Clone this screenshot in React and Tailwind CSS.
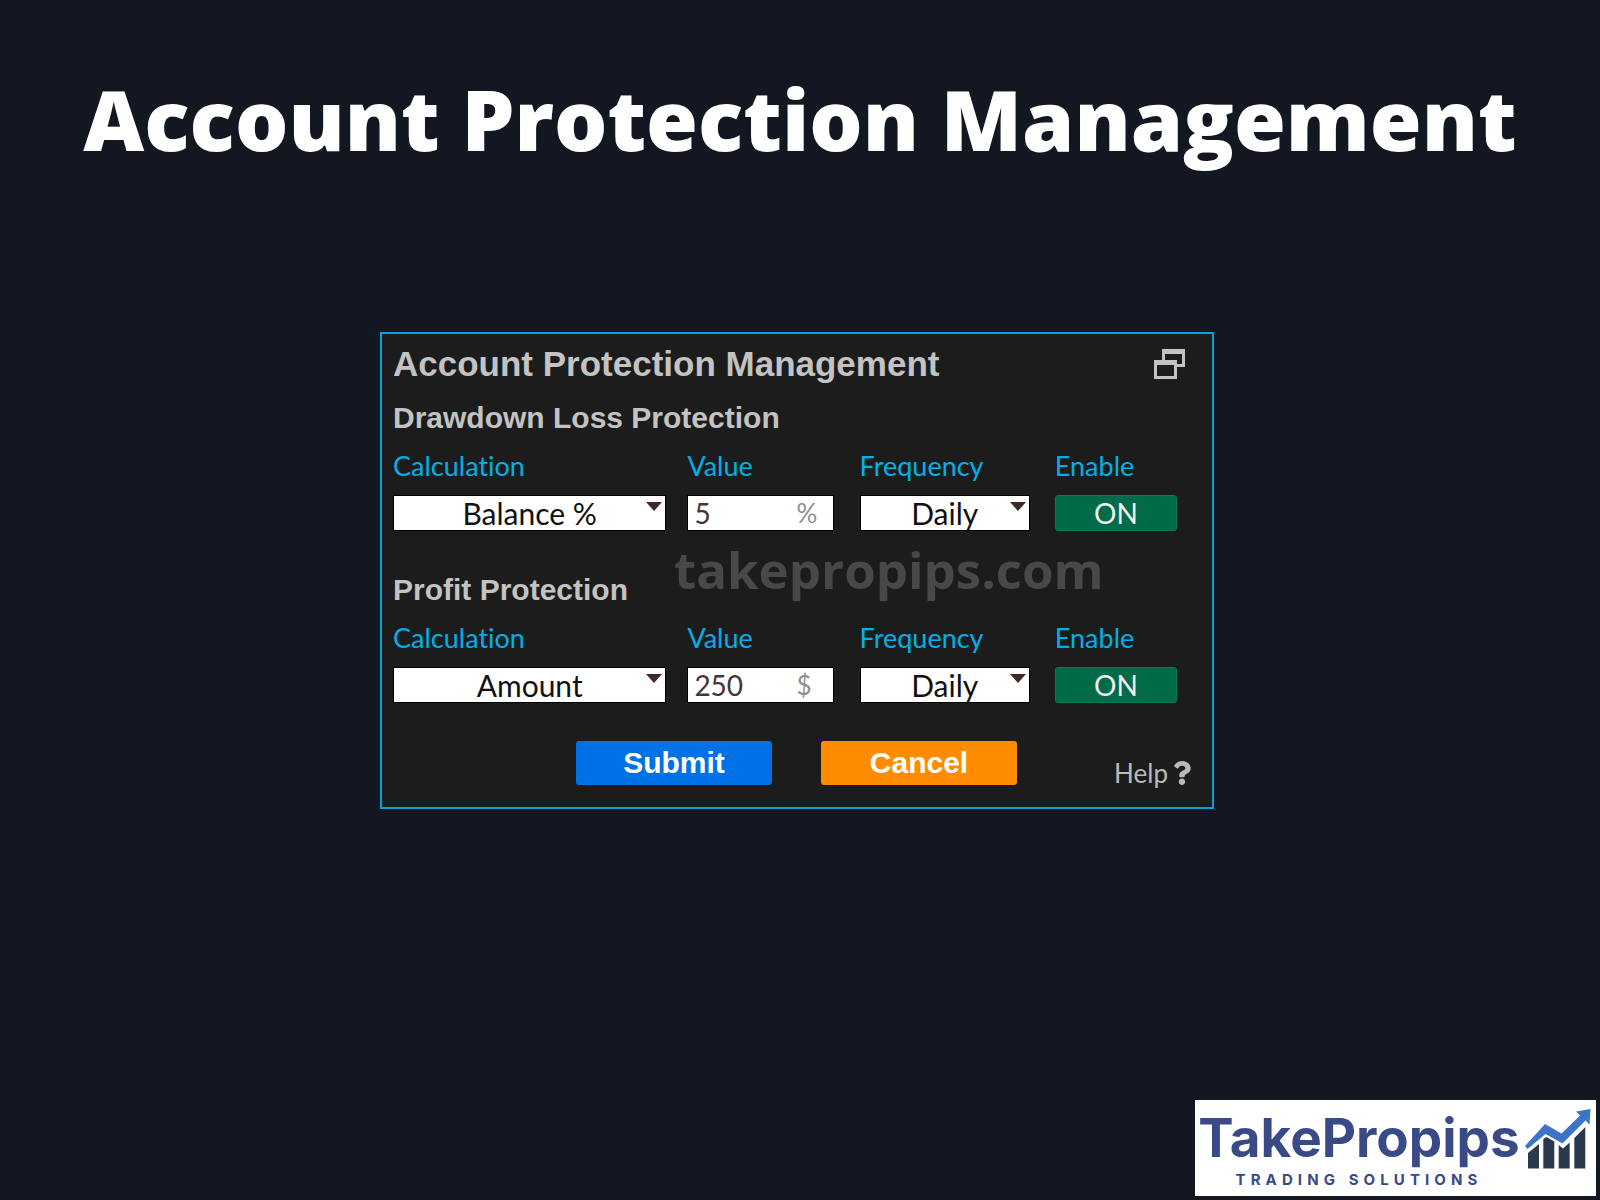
import { useState } from 'react'
import { FaQuestion } from 'react-icons/fa'

const groups = [
  {
    id: 'drawdown',
    title: 'Drawdown Loss Protection',
    calculation: 'Balance %',
    value: '5',
    unit: '%',
    frequency: 'Daily',
  },
  {
    id: 'profit',
    title: 'Profit Protection',
    calculation: 'Amount',
    value: '250',
    unit: '$',
    frequency: 'Daily',
  },
]

const calculations = ['Balance %', 'Amount']
const frequencies = ['Daily', 'Weekly', 'Monthly']

function Field({ id, label, className, children }) {
  return (
    <div className={className}>
      <label htmlFor={id} className="mb-[13px] block text-[27px] leading-8 text-[#00b0e8]">
        {label}
      </label>
      {children}
    </div>
  )
}

function SelectBox({ id, options, defaultValue }) {
  return (
    <div className="relative">
      <select
        id={id}
        defaultValue={defaultValue}
        className="block h-9 w-full appearance-none border border-black bg-white px-6 text-center text-[30px] leading-[34px] text-[#111111]"
      >
        {options.map((option) => (
          <option key={option}>{option}</option>
        ))}
      </select>
      <svg viewBox="0 0 16 9" className="pointer-events-none absolute top-[7px] right-1 h-[9px] w-4" aria-hidden="true">
        <path d="M0 0h16L8 9z" fill="#402828" />
      </svg>
    </div>
  )
}

function ProtectionGroup({ group }) {
  const [on, setOn] = useState(true)

  return (
    <section>
      <h3 className="mb-3.5 font-['Liberation_Sans',sans-serif] text-[30px] leading-9 font-bold text-[#c3c3c3]">
        {group.title}
      </h3>
      <div className="grid grid-cols-[294fr_172fr_195fr_122fr]">
        <Field id={`${group.id}-calculation`} label="Calculation" className="pr-[21px]">
          <SelectBox id={`${group.id}-calculation`} options={calculations} defaultValue={group.calculation} />
        </Field>
        <Field id={`${group.id}-value`} label="Value" className="pr-[26px]">
          <div className="flex h-9 items-center border border-black bg-white pr-3 pl-1.5">
            <input
              id={`${group.id}-value`}
              defaultValue={group.value}
              className="h-[34px] w-full min-w-0 text-[28px] leading-[34px] text-[#443636] outline-none"
            />
            <span className="w-6 shrink-0 text-[26px] leading-[34px] text-[#8f8f8f]">{group.unit}</span>
          </div>
        </Field>
        <Field id={`${group.id}-frequency`} label="Frequency" className="pr-[25px]">
          <SelectBox id={`${group.id}-frequency`} options={frequencies} defaultValue={group.frequency} />
        </Field>
        <Field id={`${group.id}-enable`} label="Enable">
          <button
            id={`${group.id}-enable`}
            type="button"
            aria-pressed={on}
            onClick={() => setOn(!on)}
            className="block h-9 w-full rounded-[3px] border border-[#007d58] bg-[#006b48] text-[28px] leading-[34px] text-[#f0f0f0]"
          >
            {on ? 'ON' : 'OFF'}
          </button>
        </Field>
      </div>
    </section>
  )
}

function Logo() {
  return (
    <div className="flex h-24 w-[401px] bg-white pl-1 text-[#394a87]">
      <div className="flex w-[320px] flex-col items-center pt-2 font-['Inter',sans-serif]">
        <div className="text-[53px] leading-[60px] font-bold">TakePropips</div>
        <div className="text-[15px] leading-6 font-bold tracking-[0.34em]">TRADING SOLUTIONS</div>
      </div>
      <svg viewBox="0 0 70 64" className="mt-2 ml-1.5 h-16 w-[70px]" aria-hidden="true">
        <g fill="#2a3a4c">
          <path d="M3 45L14 36V60.500H3z" />
          <path d="M18.300 31L21.500 29L29.300 33.500V60.500H18.300z" />
          <path d="M33.700 37L38 40.500L44.700 34.500V60.500H33.700z" />
          <path d="M49.300 30L60.300 19V60.500H49.300z" />
        </g>
        <path
          d="M0 38L20 16L36.500 25.500L55 7.500L51 3.500L65.500 1L64.500 16.500L60.500 12.500L37.500 35.500L20.500 26L2.500 41z"
          fill="#3d74c8"
        />
      </svg>
    </div>
  )
}

export default function App() {
  return (
    <div className="flex min-h-screen flex-col bg-[#131722] font-['Lato',sans-serif] [font-variant-ligatures:none]">
      <h1 className="pt-[61px] text-center font-['Open_Sans',sans-serif] text-[84px] leading-[116px] font-extrabold text-white">
        Account Protection Management
      </h1>

      <main className="mt-[155px] mr-1.5 flex justify-center">
        <form
          onSubmit={(e) => e.preventDefault()}
          className="relative w-full max-w-[834px] border-2 border-[#00a3dc] bg-[#1c1c1c] pt-2.5 pb-[18px] pl-[11px]"
        >
          <div className="mb-4 flex items-center justify-between pr-[27px]">
            <h2 className="font-['Liberation_Sans',sans-serif] text-[35px] leading-10 font-bold text-[#c3c3c3]">
              Account Protection Management
            </h2>
            <button type="button" aria-label="Restore window">
              <svg viewBox="0 0 31 30" className="h-[30px] w-[31px]" fill="#c3c3c3" aria-hidden="true">
                <path fillRule="evenodd" d="M8 0H31V18H23V15H28V5H11V11H8z" />
                <path fillRule="evenodd" d="M0 11H23V30H0zM3 16V27H20V16z" />
              </svg>
            </button>
          </div>

          <div className="flex flex-col gap-[41px] pr-[35px]">
            {groups.map((group) => (
              <ProtectionGroup key={group.id} group={group} />
            ))}
          </div>

          <div className="mt-[38px] flex font-['Liberation_Sans',sans-serif] text-[30px] leading-9 font-bold text-white">
            <button type="submit" className="ml-[183px] h-11 w-[196px] rounded-[3px] bg-[#0072e6]">
              Submit
            </button>
            <button type="button" className="ml-[49px] h-11 w-[196px] rounded-[3px] bg-[#ff8c00]">
              Cancel
            </button>
            <a
              href="#help"
              className="mt-4 mr-[18px] ml-auto flex items-center gap-0.5 font-['Lato',sans-serif] text-[26px] leading-8 font-normal text-[#b9b9b9]"
            >
              Help
              <FaQuestion className="size-6" aria-hidden="true" />
            </a>
          </div>

          <div className="pointer-events-none absolute top-[200px] left-[292px] font-['Open_Sans',sans-serif] text-[51px] leading-[70px] font-bold text-[#484848]">
            takepropips.com
          </div>
        </form>
      </main>

      <footer className="mt-auto flex justify-end pr-1 pb-1">
        <Logo />
      </footer>
    </div>
  )
}
